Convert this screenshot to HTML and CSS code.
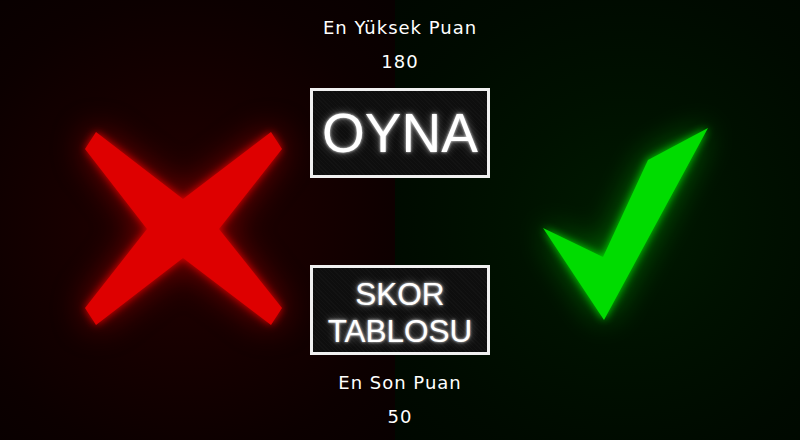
FILE: index.html
```html
<!DOCTYPE html>
<html lang="tr">
<head>
<meta charset="utf-8">
<title>Oyun Menüsü</title>
<link rel="stylesheet" href="styles.css">
</head>
<body>
<main class="stage">
  <section class="side side-left">
    <svg class="mark mark-x" width="197" height="193" viewBox="85 132 197 193" aria-hidden="true">
      <polygon points="85,149 96,132 183,199 271,132 282,149 219,229 282,308 271,325 183,258 96,325 85,308 147,229"/>
    </svg>
  </section>
  <section class="menu">
    <p class="stat">En Yüksek Puan</p>
    <p class="stat">180</p>
    <button class="btn btn-play">OYNA</button>
    <button class="btn btn-score">SKOR<br>TABLOSU</button>
    <p class="stat stat-low">En Son Puan</p>
    <p class="stat">50</p>
  </section>
  <section class="side side-right">
    <svg class="mark mark-check" width="165" height="192" viewBox="543 128 165 192" aria-hidden="true">
      <polygon points="543,228 603,257 648,160 708,128 604,320"/>
    </svg>
  </section>
</main>
</body>
</html>
```

FILE: styles.css
```css
html, body {
  margin: 0;
  padding: 0;
  background: #000;
}

.stage {
  width: 800px;
  height: 440px;
  display: flex;
  overflow: hidden;
  background:
    radial-gradient(circle at 183px 228px, #250000 0, #180000 110px, #0c0000 230px, #050000 360px) left top / 395px 100% no-repeat,
    radial-gradient(circle at 230px 224px, #001a00 0, #001100 120px, #000a00 240px, #000500 380px) right top / 405px 100% no-repeat;
}

.side {
  display: flex;
  align-items: flex-start;
}

.side-left {
  width: 310px;
  padding-left: 85px;
  padding-top: 132px;
  box-sizing: border-box;
}

.side-right {
  width: 310px;
  padding-left: 53px;
  padding-top: 128px;
  box-sizing: border-box;
}

.mark {
  overflow: visible;
  display: block;
}

.mark-x polygon {
  fill: #de0000;
}

.mark-x {
  filter: drop-shadow(0 0 4px rgba(255, 0, 0, 0.85)) drop-shadow(0 0 16px rgba(220, 0, 0, 0.5));
}

.mark-check polygon {
  fill: #00dc00;
}

.mark-check {
  filter: drop-shadow(0 0 4px rgba(0, 255, 0, 0.8)) drop-shadow(0 0 16px rgba(0, 220, 0, 0.45));
}

.menu {
  width: 180px;
  display: flex;
  flex-direction: column;
  align-items: center;
  padding-top: 11px;
}

.stat {
  margin: 0;
  font-family: "DejaVu Sans", Verdana, sans-serif;
  font-size: 18px;
  line-height: 34px;
  letter-spacing: 1px;
  color: #ffffff;
  white-space: nowrap;
}

.stat-low {
  margin-top: 11px;
}

.btn {
  width: 180px;
  height: 90px;
  box-sizing: border-box;
  border: 3px solid #f0f0f0;
  background:
    repeating-linear-gradient(45deg, rgba(255,255,255,0.02) 0 1px, transparent 1px 3px),
    #0e0e0e;
  color: #ffffff;
  font-family: "Liberation Sans", Arial, sans-serif;
  display: flex;
  align-items: center;
  justify-content: center;
  text-align: center;
  padding: 0;
  text-shadow: 0 0 3px rgba(255, 255, 255, 0.9), 0 0 8px rgba(255, 255, 255, 0.45);
}

.btn-play {
  margin-top: 9px;
  font-size: 55px;
  line-height: 1;
}

.btn-score {
  margin-top: 87px;
  font-size: 31.5px;
  line-height: 37px;
  padding-top: 6px;
}
```
